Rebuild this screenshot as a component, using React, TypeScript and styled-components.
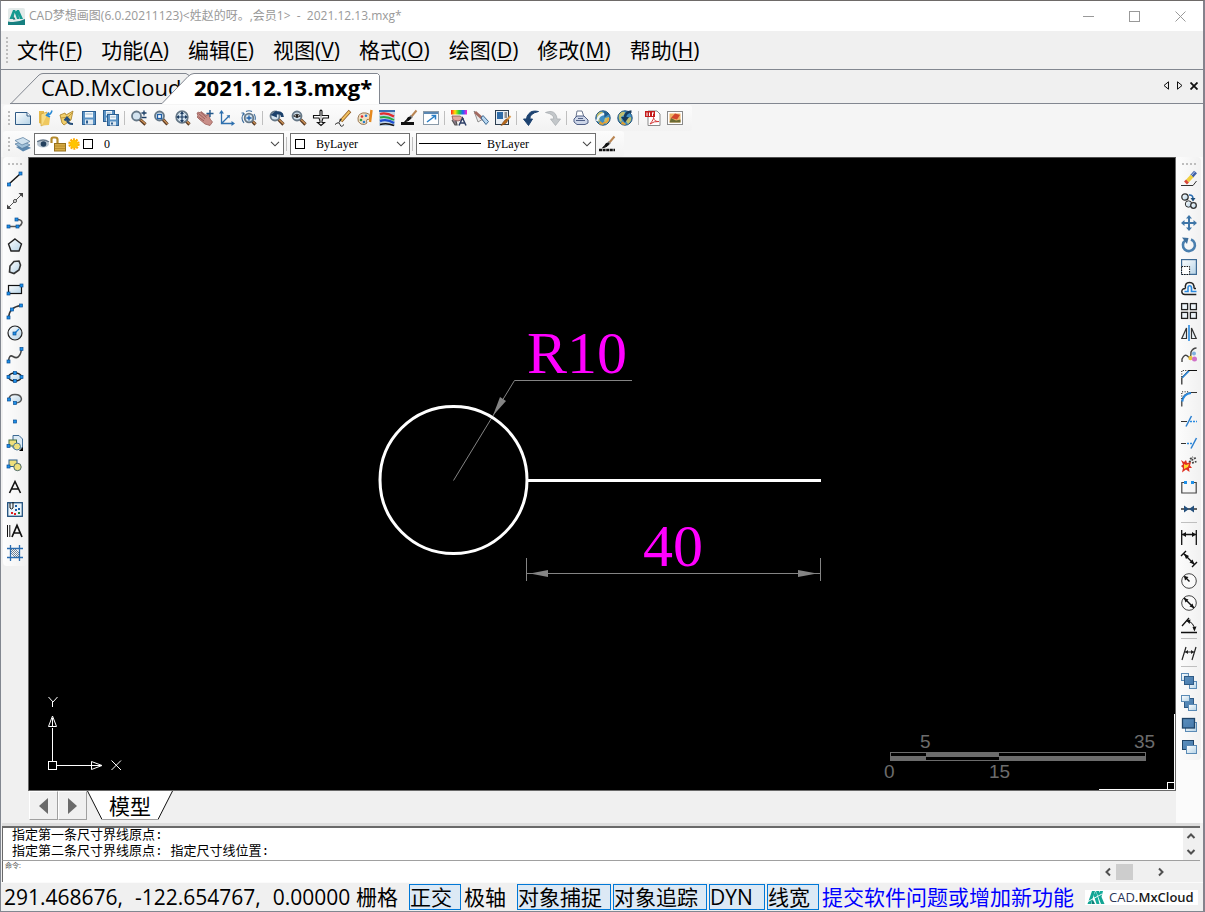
import React from "react";
import styled, { createGlobalStyle } from "styled-components";

const UI = `"Open Sans", "Noto Sans CJK SC", sans-serif`;
const LINE = "#828790";
const FACE = "#f0f0f0";

const Global = createGlobalStyle`
  * { box-sizing: border-box; }
  body { margin: 0; background: ${FACE}; font-family: ${UI}; color: #000; }
  button, select, input, textarea { font: inherit; color: inherit; margin: 0; padding: 0; border: 0; background: none; border-radius: 0; outline: none; }
`;

const Window = styled.div`
  display: flex;
  flex-direction: column;
  min-height: 100vh;
  background: ${FACE};
  border: 1px solid #6e6a68;
  border-left-color: ${LINE};
  border-right: 2px solid #85828c;
  border-bottom-color: ${LINE};
`;

/* ---------- title bar ---------- */
const TitleBar = styled.header`
  display: flex;
  align-items: center;
  height: 30px;
  background: #fff;
  padding-left: 7px;
`;
const Title = styled.h1`
  flex: 1;
  margin: 0 0 0 4px;
  font-size: 12px;
  font-weight: 400;
  line-height: 16px;
  color: #999;
  white-space: pre;
`;
const WinButton = styled.button`
  display: flex;
  align-items: center;
  justify-content: center;
  width: 46px;
  height: 28px;
`;

/* ---------- menu ---------- */
const MenuBar = styled.nav`
  display: flex;
  align-items: center;
  height: 38px;
  padding-left: 5px;
  gap: 9px;
`;
const MenuItems = styled.div`
  display: flex;
  gap: 19px;
`;
const MenuItem = styled.button`
  font-size: 21px;
  line-height: 30px;
  white-space: nowrap;
  u { text-decoration-thickness: 1px; text-underline-offset: 2px; }
`;
const Grip = styled.span<{ $length: number; $across?: boolean }>`
  flex: none;
  width: ${(p) => (p.$across ? p.$length : 2)}px;
  height: ${(p) => (p.$across ? 2 : p.$length)}px;
  background: ${(p) =>
    `repeating-linear-gradient(${p.$across ? "90deg" : "180deg"}, #bdbdbd 0 2px, transparent 2px 4px)`};
`;

/* ---------- document tabs ---------- */
const TabStrip = styled.div`
  display: flex;
  align-items: stretch;
  height: 35px;
  border-top: 1px solid ${LINE};
  padding-left: 9px;
`;
const DocTab = styled.button<{ $active?: boolean }>`
  position: relative;
  flex: none;
  width: ${(p) => (p.$active ? 218 : 152)}px;
  padding: 0 0 0 ${(p) => (p.$active ? 32 : 31)}px;
  text-align: left;
  font-size: 22px;
  line-height: 30px;
  font-weight: ${(p) => (p.$active ? 700 : 400)};
  white-space: nowrap;
  z-index: ${(p) => (p.$active ? 1 : 0)};
  svg { position: absolute; left: 0; top: 0; }
  span { position: relative; }
`;
const TabRest = styled.div`
  flex: 1;
  display: flex;
  justify-content: flex-end;
  align-items: center;
  gap: 4px;
  padding: 0 4px 2px 0;
  border-bottom: 1px solid ${LINE};
`;
const TinyButton = styled.button`
  display: flex;
  align-items: center;
  justify-content: center;
  width: 10px;
  height: 16px;
`;

/* ---------- toolbars ---------- */
const ToolRows = styled.div`
  background: #f5f5f5;
  padding: 1px 0 0 2px;
`;
const ToolRow = styled.div`
  display: flex;
  align-items: center;
  width: fit-content;
  height: 26px;
  padding: 0 6px 0 5px;
  border-radius: 3px;
  background: linear-gradient(#fcfcfc, #f2f2f2);
`;
const GripCell = styled.span`
  width: 4px;
  display: flex;
`;
const ToolButton = styled.button`
  flex: none;
  display: flex;
  align-items: center;
  justify-content: center;
  width: 22px;
  height: 22px;
`;
const Separator = styled.i<{ $across?: boolean }>`
  flex: none;
  width: ${(p) => (p.$across ? 16 : 1)}px;
  height: ${(p) => (p.$across ? 1 : 14)}px;
  margin: ${(p) => (p.$across ? "2px 3px 3px" : "0 3px 0 2px")};
  background: #bfbfbf;
`;
const Combo = styled.label<{ $w: number }>`
  display: flex;
  align-items: center;
  width: ${(p) => p.$w}px;
  height: 22px;
  background: #fff;
  border: 1px solid #707070;
  padding: 0 3px 0 2px;
`;
const Pad = styled.span`
  display: flex;
  padding: 0 2px;
`;
const ComboSelect = styled.select<{ $gap: number }>`
  flex: 1;
  min-width: 0;
  appearance: none;
  margin-left: ${(p) => p.$gap}px;
  font-family: "Liberation Serif", serif;
  font-size: 12px;
  line-height: 18px;
`;

const Body = styled.div`
  flex: 1;
  display: flex;
  align-items: stretch;
`;
const SideBar = styled.aside<{ $right?: boolean }>`
  flex: none;
  width: 27px;
  padding: ${(p) => (p.$right ? "0 2px 0 0" : "0 1px 0 2px")};
  background: ${(p) => (p.$right ? "#fbfbfb" : FACE)};
`;
const SideTools = styled.div`
  display: flex;
  flex-direction: column;
  align-items: center;
  padding: 6px 0 2px;
  border-radius: 4px;
  background: linear-gradient(90deg, #fdfdfd, #f1f1f1);
  & > span { margin-bottom: 3px; }
`;
const Workspace = styled.main`
  flex: 1;
  min-width: 0;
  display: flex;
  flex-direction: column;
`;
const Canvas = styled.section`
  position: relative;
  flex: 1;
  min-height: 400px;
  background: #000;
  border: 1px solid #696969;
  border-top-color: #505050;
  overflow: hidden;
  svg { position: absolute; display: block; }
`;
const Drawing = styled.svg`
  left: 341px;
  top: 152px;
`;
const Ucs = styled.svg`
  left: 11px;
  bottom: 10px;
`;
const ScaleBar = styled.svg`
  right: 0;
  bottom: 0;
`;

/* ---------- layout tabs ---------- */
const LayoutRow = styled.div`
  display: flex;
  height: 32px;
  align-items: flex-start;
  padding-left: 1px;
`;
const NavButton = styled.button`
  display: flex;
  align-items: center;
  justify-content: center;
  width: 29px;
  height: 29px;
  border: 1px solid #a0a0a0;
  border-left-color: #fff;
  border-top-color: #fff;
`;
const LayoutTab = styled.button`
  position: relative;
  width: 86px;
  height: 29px;
  font-size: 21px;
  line-height: 28px;
  svg { position: absolute; left: 0; top: 0; }
  span { position: relative; }
`;

/* ---------- command window ---------- */
const Command = styled.section`
  margin: 0 3px 0 1px;
  border-top: 3px solid #dedede;
`;
const History = styled.div`
  display: flex;
  height: 35px;
  background: #fff;
  border: solid #696969;
  border-width: 2px 0 1px 1px;
  border-bottom-color: #a0a0a0;
`;
const HistoryText = styled.pre`
  flex: 1;
  margin: 0;
  height: 32px;
  padding-left: 9px;
  overflow: hidden;
  font-family: "Liberation Mono", "Noto Sans CJK SC", monospace;
  font-size: 13px;
  line-height: 16px;
`;
const VScroll = styled.div`
  width: 17px;
  display: flex;
  flex-direction: column;
  justify-content: space-between;
  background: ${FACE};
`;
const ScrollButton = styled.button`
  display: flex;
  align-items: center;
  justify-content: center;
  width: 16px;
  height: 16px;
`;
const Prompt = styled.div`
  display: flex;
  height: 21px;
  border-left: 1px solid #696969;
`;
const PromptField = styled.label`
  flex: 1;
  display: flex;
  align-items: flex-start;
  background: #fff;
  padding-left: 2px;
  font-size: 7px;
  line-height: 9px;
  color: #555;
  input { flex: 1; margin-left: 2px; font-size: 12px; line-height: 18px; color: #000; }
`;
const HScroll = styled.div`
  display: flex;
  align-items: center;
  width: 100px;
  background: ${FACE};
`;
const Thumb = styled.span`
  width: 17px;
  height: 16px;
  margin-right: 20px;
  background: #cdcdcd;
`;

/* ---------- status bar ---------- */
const StatusBar = styled.footer`
  display: flex;
  align-items: center;
  gap: 2px;
  height: 29px;
  padding-left: 1px;
  border-top: 1px solid #fbfbfb;
  font-size: 21px;
  line-height: 24px;
  white-space: nowrap;
`;
const Coords = styled.output`
  display: flex;
  gap: 12px;
  width: 351px;
  padding-left: 2px;
`;
const Toggle = styled.button<{ $on?: boolean; $min?: number }>`
  height: 26px;
  min-width: ${(p) => p.$min ?? 0}px;
  padding: 0 8px 0 0;
  text-align: left;
  line-height: 24px;
  border: 1px solid ${(p) => (p.$on ? "#0078d7" : "transparent")};
  background: ${(p) => (p.$on ? "#dce9f5" : "transparent")};
`;
const Feedback = styled.a`
  padding: 0 9px 0 1px;
  color: #0000ff;
  text-decoration: none;
`;
const Brand = styled.div`
  display: flex;
  align-items: center;
  gap: 4px;
  height: 15px;
  padding: 0 4px 0 2px;
  background: #fff;
  font-size: 13px;
  line-height: 15px;
  font-weight: 600;
  color: #1a1a1a;
  em { font-style: normal; font-weight: 400; color: #2b3558; }
`;

/* ---------- icons ---------- */
const I = ({ children }: { children: React.ReactNode }) => (
  <svg width="18" height="18" viewBox="-1 -1 18 18" fill="none" strokeWidth="1" aria-hidden="true">
    {children}
  </svg>
);
const DB = "#2f5a85";
const Lens = ({ cx = 6, cy = 6, r = 4.5, children }: any) => (
  <I>
    <path d={`M${cx + 3.4} ${cy + 3.4}L14.5 14.5`} stroke="#5b3c26" strokeWidth="3.2" />
    <path d={`M${cx + 4} ${cy + 3.6}L14.5 13.8`} stroke="#d89a5a" strokeWidth="1.2" />
    <circle cx={cx} cy={cy} r={r} fill="#d3e3ef" stroke="#667887" strokeWidth="1.8" />
    {children}
  </I>
);
const Grad = () => (
  <svg width="0" height="0" style={{ position: "absolute" }} aria-hidden="true">
    <defs>
      <linearGradient id="ice" x1="0" y1="0" x2="1" y2="1">
        <stop offset="0" stopColor="#ffffff" />
        <stop offset="1" stopColor="#b4d2e6" />
      </linearGradient>
      <linearGradient id="deep" x1="0" y1="0" x2="1" y2="1">
        <stop offset="0" stopColor="#5c8fbd" />
        <stop offset="1" stopColor="#4679ab" />
      </linearGradient>
      <linearGradient id="hue" x1="0" y1="0" x2="1" y2="0">
        <stop offset="0" stopColor="#ff2020" />
        <stop offset=".25" stopColor="#ffe000" />
        <stop offset=".5" stopColor="#20d040" />
        <stop offset=".75" stopColor="#2060ff" />
        <stop offset="1" stopColor="#ff20d0" />
      </linearGradient>
    </defs>
  </svg>
);
const Node = ({ x, y }: { x: number; y: number }) => (
  <rect x={x - 1.5} y={y - 1.5} width="3" height="3" fill="#1e90e8" stroke="#0a4f94" strokeWidth=".7" />
);
const Floppy = ({ x = 0, y = 0, s = 13 }: any) => (
  <g transform={`translate(${x} ${y})`}>
    <rect x=".5" y=".5" width={s} height={s} fill="#5a92c4" stroke="#2c5f92" />
    <rect x="3" y="1" width={s - 5} height={s / 2 - 1} fill="#f3f8fb" />
    <path d={`M3.5 3H${s - 2.5}`} stroke="#9ab6cc" />
    <rect x="3" y={s / 2 + 2} width={s - 5} height={s / 2 - 1.5} fill="#dfe9f1" />
    <rect x="4" y={s / 2 + 3} width="2" height={s / 2 - 3.5} fill="#2c5f92" />
  </g>
);
const Globe = () => (
  <>
    <circle cx="8" cy="8" r="7.2" fill="#3f8fc4" stroke="#1c4f78" />
    <path d="M2 5Q4 1 8 2L7 5 4 7 5 11 3 12Q1 8 2 5ZM10 8L14 7Q15 11 11 14L9 11Z" fill="#c2c070" />
    <path d="M5 11L9 14 8 15 4 14Z" fill="#e0a030" />
  </>
);
const Brush = () => (
  <g>
    <path d="M15.5 .5L10 7" stroke="#b98552" strokeWidth="2" />
    <path d="M10.8 6L8.8 8.2" stroke="#888" strokeWidth="3" />
    <path d="M9.8 7.2Q10 10.5 3.5 11.8Q6.3 9.6 7 7.5Z" fill="#111" stroke="#111" />
  </g>
);

const icons: Record<string, React.ReactNode> = {
  new: <I><path d="M.5 2.5H12L15.500 6V14.500H.5Z" fill="url(#ice)" stroke={DB} /><path d="M12 2.500V6H15.500" stroke={DB} fill="#fff" /></I>,
  open: <I><path d="M2 1H7V15L2 13Z" fill="#e5ba4c" /><path d="M4 4L10 2V13L4 16Z" fill="#f8dd85" stroke="#c9982e" strokeWidth=".6" /><path d="M10 6L13 8 12 15 5 15.500 8 9Z" fill="#efc85f" /><path d="M15 .5Q14 4.500 11 5M12 2.500L9.500 5.200 13 7" stroke="#2a8ad4" strokeWidth="1.500" /></I>,
  recent: <I><path d="M1 5L6 3 7 5 14 1 12 10 5 15 3 13Z" fill="#f1cf6b" stroke="#a67c22" strokeWidth=".8" /><path d="M2 8L9 7 13 3" stroke="#c19a3c" /><path d="M14 14Q8 14 8 9M5.500 10.500L8 7.500 10.800 10.500" stroke="#274f7a" strokeWidth="2" /></I>,
  save: <I><Floppy x={1} y={1} /></I>,
  saveall: <I><Floppy x={0} y={0} s={11} /><Floppy x={4} y={4} s={11} /></I>,
  zoomrt: <Lens cx={5.5} cy={6}><path d="M10.500 3H15.500M13 .5V5.500M10.500 7.500H15.500" stroke="#1d3f66" strokeWidth="1.300" /></Lens>,
  zoomwin: <Lens cx={6.5}><rect x="4.500" y="4.500" width="4" height="4" fill="#fff" stroke="#1e5fa8" strokeWidth="1.300" /></Lens>,
  zoomext: <Lens cx={7} cy={7} r={5.8}><path d="M7 2V12M2 7H12" stroke="#1a3a60" strokeWidth="1.200" /><path d="M7 1.500L9 4H5ZM7 12.500L5 10H9ZM1.500 7L4 5V9ZM12.500 7L10 9V5Z" fill="#1a3a60" /></Lens>,
  pan: <I><path d="M0 3L2 2 3 3 4 1.500 10 6 10 3.500 12 4 13 9 15.500 12 13 15.500 8 14 2 9 0 7 1 6Z" fill="#c98e88" stroke="#9a615c" strokeWidth=".8" /><path d="M1.500 3.500L8 9M4 2.500L9.500 7.500M1.500 7L7 11" stroke="#8b504e" strokeWidth=".8" /><path d="M13 0V7M9.500 3.500H16.500" stroke="#255a8c" strokeWidth="1.400" /></I>,
  ucs: <I><path d="M2.500 2V13.500H14M2.500 13.500L9 7" stroke="#2d6fae" strokeWidth="1.300" /><path d="M2.500 0L5 3.500H0ZM16 13.500L12.500 11V16ZM11 5L10.500 8.500 7.500 5.500Z" fill="#2d6fae" /></I>,
  zoomdyn: <Lens cx={8} cy={8} r={4.3}><path d="M8 5.500V10.500M5.500 8H10.500" stroke="#1e5fa8" strokeWidth="1.300" /><path d="M3 13Q-1 8 3 3M5 1.500Q8 0 11 1.500M3 3H.5M3 3V5.500M13 4Q15 7 14 10" stroke="#3e6f9f" strokeWidth="1.100" /></Lens>,
  zoomprev: <Lens cx={6}><path d="M13.500 7Q13 1 6 3.500" stroke="#1b416b" strokeWidth="2.800" /><path d="M1.500 5L7.500 .5 8 7.500Z" fill="#1b416b" /></Lens>,
  zoomeye: <Lens cx={6}><path d="M2.500 6Q6 2.500 9.500 6Q6 9 2.500 6Z" fill="#fff" stroke="#333" /><circle cx="6" cy="6" r="1.500" fill="#222" /></Lens>,
  plane: <I><path d="M7 1L8 0 9 1V5.500H15.500V8H10L9 11V12.500H11.500L8 15.500 4.500 12.500H7V11L6 8H.5V5.500H7Z" fill="#fff" stroke="#111" strokeWidth="1.100" /><path d="M8 2V13" stroke="#777" strokeWidth=".8" /></I>,
  pencil: <I><path d="M15 1L6 11" stroke="#8a5218" strokeWidth="3.400" /><path d="M14.500 1.500L6 11" stroke="#f0c060" strokeWidth="2" /><path d="M7 9.500L3.500 13.500 5 8.500Z" fill="#333" /><path d="M0 14.500Q4 11 5 14.500T9 14.500" stroke="#222" /></I>,
  palette: <I><path d="M1 8Q2 2 9 3Q14 4 13 8Q12 10 10 9.500Q9 11 10 13Q8 15.500 4 14Q0 12 1 8Z" fill="#f2dfc4" stroke="#9a7a55" /><circle cx="5" cy="6.500" r="1.300" fill="#e03030" /><circle cx="9" cy="5.800" r="1.300" fill="#2a7fd0" /><circle cx="4" cy="10" r="1.300" fill="#35a040" /><circle cx="7" cy="12" r="1.300" fill="#2a7fd0" /><path d="M14.500 0L13 12" stroke="#e58a20" strokeWidth="2.400" /></I>,
  swirl: <I><rect x="0" y="0" width="16" height="16" fill="#c3d5e6" /><path d="M0 0H16V2H0Z" fill="#3a6fb0" /><path d="M1 4Q7 2 15 6.500" stroke="#e22d2d" strokeWidth="2.200" /><path d="M1 7.500Q7 5.500 15 10" stroke="#27a844" strokeWidth="2" /><path d="M1 11Q8 8.500 15 13" stroke="#1d4fd0" strokeWidth="2.400" /><path d="M1 14.500Q8 12.500 15 15.500" stroke="#111" strokeWidth="1.600" /></I>,
  brush: <I><Brush /><path d="M0 13.500H13" stroke="#111" strokeWidth="3" /></I>,
  expand: <I><rect x=".5" y="1.500" width="15" height="13" fill="#fff" stroke="#8a9aa8" /><path d="M1 3H15" stroke="#5a87b2" strokeWidth="2" /><path d="M4 12L12 6M8.500 5.500H12.500V9.500" stroke="#2a7fc6" strokeWidth="1.500" /></I>,
  match: <I><rect x="0" y="0" width="16" height="4.500" fill="url(#hue)" /><path d="M1 6H9L13 9 7 11 2 10Z" fill="#e2a8a0" stroke="#8b504e" strokeWidth=".8" /><path d="M1 10L4 15H6L5 11" stroke="#555" strokeWidth="1.200" fill="#8c7a88" /><path d="M8 15.500L11.500 8 15 15.500M9.500 13H13.500" stroke="#2c3e66" strokeWidth="1.500" /></I>,
  rubber: <I><path d="M1 1L5 12 10 9Z" fill="#e9e9e9" stroke="#777" strokeWidth=".8" /><path d="M2 2L11 10" stroke="#a36a60" strokeWidth="3" /><path d="M8 8L13 14.500 15.500 11.500 10 5.500Z" fill="#b9d7ef" stroke="#3c6a94" /></I>,
  style: <I><rect x=".5" y=".5" width="13" height="14" fill="#e8eef4" stroke="#2c3e50" /><rect x="2" y="2" width="6" height="7" fill="#2f6ca8" /><path d="M9.500 3H12M9.500 5H12M9.500 7H12" stroke="#333" /><path d="M15.500 6L11 11" stroke="#dd9a4c" strokeWidth="2" /><path d="M12 9Q14 13 6 15.500Q8 12 10 10Z" fill="#b96a1c" stroke="#7b4512" strokeWidth=".6" /></I>,
  undo: <I><path d="M15.500 1.500Q9 0 6 3.500Q3.500 6 3.500 9H.5L5.500 15.500 9.500 9H6.800Q6.500 3.500 15.500 1.500Z" fill="#1c4270" stroke="#1c4270" /></I>,
  redo: <I><path d="M.5 2.500Q7 0 10 3.500Q12 6 12 9H15.500L10.500 15.500 5.500 9H8.800Q9 4 .5 2.500Z" fill="#c3c7ca" stroke="#a9aeb2" strokeWidth=".8" /></I>,
  print: <I><path d="M3 7L4 1H9L11 7" fill="#fff" stroke="#6c7890" /><path d="M1 9L4 6H11L15 10V13L12 14.500H4L1 12Z" fill="#cdd6e8" stroke="#4f5f86" /><path d="M3 10.500H12M5 8.500H10" stroke="#4f5f86" strokeWidth="1.200" /></I>,
  webup: <I><Globe /><path d="M2 11Q4 3 12 4" stroke="#eef4f8" strokeWidth="2.200" /><path d="M9 1L14 4 9.500 7.500Z" fill="#1f5a8a" /><path d="M8 13Q13 13 13.500 8" stroke="#f0a030" strokeWidth="1.600" /></I>,
  webdown: <I><Globe /><path d="M14.500 1.500Q8 2 8 8" stroke="#163a5c" strokeWidth="2.600" /><path d="M4 7H12L8 12.500Z" fill="#163a5c" /></I>,
  pdf: <I><path d="M3 1H12L15 4V15.500H3Z" fill="#fff" stroke="#8a8a8a" /><rect x="0" y="1" width="10" height="6" fill="#c41c1c" /><path d="M2 2.500V6M4.500 2.500V6M7.500 2.500V6M7.500 3H9" stroke="#fff" /><path d="M5 14Q9 9 8.500 7.500Q9.500 12 14 11.500Q9 11 5 14" stroke="#d43a3a" /></I>,
  image: <I><rect x=".5" y="1.500" width="15" height="13" fill="#fff" stroke="#8a8a8a" /><rect x="2.500" y="3.500" width="11" height="9" fill="#f0b264" /><path d="M2.500 12.500L4 8 9 10.500 13.500 9.500V12.500Z" fill="#6a6b34" /><path d="M4 8L8 3.500 13 5 10 9.500Z" fill="#d2452c" /></I>,
  layers: <I><path d="M1 11L9 8 16 12 8 15.500Z" fill="#5b87ae" /><path d="M0 8L8 5 15 9 7 12.500Z" fill="#9fc0d9" stroke="#53799b" strokeWidth=".7" /><path d="M0 4.500L8 1.500 15 5.500 7 9Z" fill="#cfe1ee" stroke="#53799b" strokeWidth=".7" /></I>,
  brushline: <I><Brush /><path d="M0 14H16" stroke="#111" strokeWidth="2.600" strokeDasharray="3 .6" /></I>,

  line: <I><path d="M2 13L13 3" stroke="#111" strokeWidth="1.400" /><Node x={2} y={13.5} /><Node x={13.5} y={2.5} /></I>,
  xline: <I><path d="M1 15L15 1" stroke="#555" /><path d="M0 16V11.500L4.500 16ZM16 0V4.500L11.500 0Z" fill="#444" /><circle cx="8" cy="8" r="1.500" fill="#fff" stroke="#444" /></I>,
  pline: <I><path d="M2 11.500H10M9 4.500Q14.500 4 15 7.500Q14 11.500 10 11.500" stroke="#555" strokeWidth="1.600" /><Node x={1.5} y={11.5} /><Node x={10.5} y={11.5} /><Node x={9.5} y={4.5} /></I>,
  polygon: <I><path d="M8 2L14.500 7 12 14H4L1.500 7Z" fill="url(#ice)" stroke="#222" strokeWidth="1.400" /></I>,
  poly2: <I><path d="M7 2.500L12 2 13.500 6 12 11 7 14.500 2.500 13 3 7Z" fill="url(#ice)" stroke="#333" strokeWidth="1.600" /></I>,
  rect: <I><rect x="1.500" y="4.500" width="13" height="8" fill="url(#ice)" stroke="#111" strokeWidth="1.200" /><Node x={1.5} y={12.5} /><Node x={14.5} y={4.5} /></I>,
  arc: <I><path d="M1.500 15Q2 4 14 2.500" stroke="#333" strokeWidth="1.300" /><Node x={1.5} y={14.5} /><Node x={5} y={6.5} /><Node x={14} y={2.5} /></I>,
  circle: <I><circle cx="8" cy="8" r="7" fill="url(#ice)" stroke="#222" strokeWidth="1.200" /><path d="M8 8L12 4" stroke="#1e7fd0" strokeWidth="1.300" /><Node x={7.5} y={8.5} /></I>,
  spline: <I><path d="M1.500 14.500Q2 7 6 9.500T12 9Q14 7 14.500 2" stroke="#444" strokeWidth="1.500" /><Node x={1.5} y={14.5} /><Node x={14.5} y={2} /></I>,
  ellipse: <I><ellipse cx="8" cy="8" rx="6.500" ry="4" fill="url(#ice)" stroke="#222" strokeWidth="1.300" /><Node x={1.5} y={8} /><Node x={14.5} y={8} /><Node x={8} y={4} /><Node x={8} y={12} /></I>,
  ellarc: <I><path d="M2 8.500Q2 3.500 8 3.500T14.500 8Q14 12 8 12" fill="url(#ice)" stroke="#555" strokeWidth="1.500" /><Node x={2} y={8.5} /><Node x={8} y={12} /></I>,
  point: <I><Node x={8} y={8.5} /></I>,
  insert: <I><path d="M6 .5H12L15.500 4V13H6Z" fill="#dceaf5" stroke="#3d6a94" /><rect x="2" y="5" width="7.500" height="6" fill="#f0e07c" stroke="#3f6a3f" /><circle cx="10" cy="11.500" r="3.500" fill="#f0e07c" stroke="#4b7a9b" /><Node x={1.5} y={11} /><path d="M16 12V16H12Z" fill="#000" /></I>,
  block: <I><rect x="2" y="3" width="8" height="6.500" fill="#f0e07c" stroke="#2a5c8c" /><circle cx="10.500" cy="10" r="3.700" fill="#f0e07c" stroke="#4b6a6b" /><Node x={1.5} y={9.5} /></I>,
  text: <I><path d="M2.500 14L8 2.500 13.500 14M4.500 10H11.500" stroke="#111" strokeWidth="1.600" /></I>,
  attach: <I><rect x=".7" y="1.700" width="14.600" height="13.600" fill="#eaf4fa" stroke="#1f4f7c" strokeWidth="1.300" /><path d="M3 2V7Q4.500 9 6 7V1" stroke="#111" /><path d="M8 4h2v2h-2zM11 7h2v2h-2zM8 8h2v2h-2z" fill="#1e5fa8" /><path d="M4 11h2v2h-2zM7 12h2v2h-2z" fill="#e02020" /><path d="M11 11h2v2h-2z" fill="#208040" /></I>,
  mtext: <I><path d="M.5 2V14M2.800 2V14" stroke="#111" /><path d="M5 14L10 2.500 15 14M6.800 10H13.200" stroke="#111" strokeWidth="1.700" /></I>,
  hatch: <I><path d="M3.500 0V16M12.500 0V16M0 3.500H16M0 12.500H16" stroke="#2a6cb0" strokeWidth="1.300" /><path d="M4 8L8 12M4 4L12 12M8 4L12 8M4 6L10 12M6 4L12 10" stroke="#2f4f6f" strokeWidth=".7" /></I>,

  erase: <I><path d="M14.500 1L10.500 5.500" stroke="#3d5fa8" strokeWidth="4" /><path d="M14 .5L10 5" stroke="#b8c8e8" /><path d="M11 5L6.500 10" stroke="#f0d040" strokeWidth="4" /><path d="M6.500 10L4.500 12" stroke="#d84838" strokeWidth="4" /><path d="M0 14.500H12L15.500 10" stroke="#333" /></I>,
  copy: <I><circle cx="4" cy="4" r="3.200" fill="url(#ice)" stroke="#333" strokeWidth="1.300" /><circle cx="7.500" cy="11" r="3.200" fill="url(#ice)" stroke="#333" /><circle cx="12.500" cy="12.500" r="2.800" fill="url(#ice)" stroke="#333" strokeWidth="1.300" /><path d="M8 2Q12 1.500 12 6" stroke="#2a6cb0" strokeWidth="1.600" /><path d="M9.500 5H14.500L12 8.500Z" fill="#1f4f7c" /></I>,
  move: <I><path d="M8 2V14M2 8H14" stroke="#3f76a8" strokeWidth="2" /><path d="M8 0L11 3.500H5ZM8 16L5 12.500H11ZM0 8L3.500 5V11ZM16 8L12.500 11V5Z" fill="#3f76a8" /></I>,
  rotate: <I><path d="M10 2.500A6 6 0 1 1 4.500 3.200" stroke="#4a7fae" strokeWidth="2.600" /><path d="M1 .5L7.500 1 6 7Z" fill="#3f6f9c" /></I>,
  scale: <I><rect x=".6" y=".6" width="14.800" height="14.800" fill="url(#ice)" stroke="#3d6a94" strokeWidth="1.200" /><rect x=".6" y="7.500" width="8" height="8" fill="#fff" stroke="#111" strokeDasharray="1.500 1" /></I>,
  offset: <I><path d="M4.500 7.500Q3.500 1.500 8.500 1.500T13 7.500M4.500 7.500Q.8 7.500 .8 10.500T4 13.500H15.300M13 7.500H15" stroke="#222" strokeWidth="1.400" /><path d="M3.500 10.500H7V7Q7 4.800 8.700 4.800T10.500 7V10.500H15.500" stroke="#2a8ae0" strokeWidth="1.600" /></I>,
  array: <I>{[[0.6, 0.6], [9.4, 0.6], [0.6, 9.4], [9.4, 9.4]].map(([x, y]) => <rect key={`${x}${y}`} x={x} y={y} width="6" height="6" fill="#eef5fa" stroke="#222" strokeWidth="1.300" />)}</I>,
  mirror: <I><path d="M8 0V16" stroke="#2a8ae0" strokeWidth="1.600" /><path d="M5.500 3V13.500H.8ZM10.500 3V13.500H15.200Z" fill="#eef5fa" stroke="#333" strokeWidth="1.200" /></I>,
  blend: <I><path d="M1 15V12Q4 6 7 9.500T10 5Q12 1 15.500 1" stroke="#444" strokeWidth="1.400" /><circle cx="13" cy="6.500" r="2" fill="#7fb0e0" /><circle cx="9.500" cy="11" r="2.200" fill="#e8c040" /><circle cx="13.500" cy="12" r="2.500" fill="#d070c8" /></I>,
  chamfer: <I><path d="M.8 15.500V9L8 1.500" stroke="#333" strokeWidth="1.300" /><path d="M1.200 8.800L8 2" stroke="#2a8ae0" strokeWidth="1.500" /><path d="M8 1.500H16" stroke="#111" /><path d="M.8 8V1.500H8" stroke="#111" strokeDasharray="1 1.500" /></I>,
  fillet: <I><path d="M.8 15.500V10Q2 2.500 10 1.500H16" stroke="#333" strokeWidth="1.200" /><path d="M1.200 10.500Q2.500 3 10 2" stroke="#2a8ae0" strokeWidth="2.200" /><path d="M.8 8V.8H8" stroke="#111" strokeDasharray="1 1.500" /></I>,
  trim: <I><path d="M0 8.500H6" stroke="#333" /><path d="M9 8.500H16" stroke="#2a8ae0" strokeDasharray="2 1" strokeWidth="1.300" /><path d="M5 13.500L10.500 3" stroke="#2a7fd0" strokeWidth="1.500" /></I>,
  extend: <I><path d="M0 8.500H5" stroke="#333" /><path d="M6 8.500H11" stroke="#2a8ae0" strokeDasharray="2 1" strokeWidth="1.300" /><path d="M10 13.500L15.500 3" stroke="#2a7fd0" strokeWidth="1.500" /></I>,
  explode: <I><path d="M0 3L3 5 5 3 6 6 10 5 9 8.500 11 11 8 11 8.500 15 5 12.500 1 15.500 2 11 0 9 2 7.500Z" fill="#e03020" /><path d="M3 7L5 8 8 7 7 10 5 11 3 12Z" fill="#ffd830" /><path d="M8 5L15 .5M11 6L15.500 4.500M9 2L12 0" stroke="#444" strokeWidth="1.700" strokeDasharray="2 1" /></I>,
  breakpt: <I><path d="M3.500 3.500H.8V14H15.200V3.500H12.500" stroke="#444" strokeWidth="1.200" /><rect x="3" y="2" width="3" height="3" fill="#1e90e8" /><rect x="10" y="2" width="3" height="3" fill="#1e90e8" /></I>,
  join: <I><path d="M0 8H16" stroke="#222" strokeWidth="1.400" /><path d="M3 4.500L8 8 3 11.500ZM13 4.500L8 8 13 11.500Z" fill="#24507c" /></I>,
  dimlin: <I><path d="M.7 1V16M15.300 1V16M1 5.500H15" stroke="#111" strokeWidth="1.300" /><path d="M1 5.500L5 3V8ZM15 5.500L11 3V8Z" fill="#111" /></I>,
  dimali: <I><path d="M0 5L5 0M11 16L16 11M3 3L13 13" stroke="#111" strokeWidth="1.400" /><path d="M3 2.500L8 5 5 8ZM13.500 13.500L8.500 11.500 11.500 8.500Z" fill="#111" /></I>,
  dimrad: <I><circle cx="8" cy="8" r="7.300" fill="#fafafa" stroke="#444" /><path d="M8.500 8.500L3.500 3.500" stroke="#111" strokeWidth="1.400" /><path d="M3 3L7.500 4 4 7.500Z" fill="#111" /></I>,
  dimdia: <I><circle cx="8" cy="8" r="7.300" fill="#fafafa" stroke="#444" /><path d="M3 3L13 13" stroke="#111" strokeWidth="1.400" /><path d="M3 3L7.500 4.500 4.500 7.500ZM13 13L8.500 11.500 11.500 8.500Z" fill="#111" /></I>,
  dimang: <I><path d="M0 15.500H16M1 9L8 1" stroke="#111" strokeWidth="1.300" /><path d="M6 4Q13 5 13.500 13" stroke="#111" /><path d="M5.500 3.500L9.500 2.500 8.500 7ZM13.500 14.500L11.500 10 15.500 9.500Z" fill="#111" /></I>,
  dimedit: <I><path d="M1 15L5 2M11 15L15 2M4 7H13" stroke="#222" strokeWidth="1.200" /><path d="M4 7L7 5V9ZM13 7L10 5V9Z" fill="#222" /></I>,
  front: <I><rect x=".5" y=".5" width="7" height="7" fill="url(#ice)" stroke="#5a8ab5" /><rect x="8.500" y="8.500" width="7" height="7" fill="url(#ice)" stroke="#5a8ab5" /><rect x="3.500" y="3.500" width="9" height="8" fill="url(#deep)" stroke="#2f5a85" /></I>,
  back: <I><rect x="3.500" y="3.500" width="9" height="9" fill="url(#deep)" stroke="#2f5a85" /><rect x=".5" y=".5" width="8" height="6" fill="url(#ice)" stroke="#5a8ab5" /><rect x="7.500" y="9.500" width="8" height="6" fill="url(#ice)" stroke="#5a8ab5" /></I>,
  above: <I><rect x="4.500" y="5.500" width="11" height="9" fill="url(#ice)" stroke="#5a8ab5" /><rect x="1.500" y="1.500" width="12" height="9.500" fill="url(#deep)" stroke="#1f4468" strokeWidth="1.300" /></I>,
  under: <I><rect x="1.500" y="1.500" width="11" height="9" fill="url(#deep)" stroke="#1f4468" /><rect x="5.500" y="6.500" width="10" height="8" fill="url(#ice)" stroke="#5a8ab5" /></I>,
};

const Mark = () => (
  <svg width="18" height="15" viewBox="0 0 18 15" aria-hidden="true">
    <path d="M5 1H8L4 14H.5ZM9 1H12L17.500 14H14Z" fill="#12a594" />
    <path d="M6.500 5L9 1 12.500 14H9.500ZM13 1H16L14.500 7 12.500 3Z" fill="#16ab9a" />
    <path d="M5.500 9L8 14H4.500Z" fill="#0c7f77" />
    <path d="M1 11.500L15 4" stroke="#fff" strokeWidth=".9" />
  </svg>
);
const Chevron = () => (
  <svg width="10" height="6" viewBox="0 0 10 6" fill="none" aria-hidden="true">
    <path d="M1 .8L5 4.800 9 .8" stroke="#444" strokeWidth="1.100" />
  </svg>
);
const Swatch = () => (
  <svg width="11" height="11" viewBox="0 0 11 11" aria-hidden="true">
    <rect x=".5" y=".5" width="9" height="9" fill="#fff" stroke="#000" />
  </svg>
);
const Arrow = ({ d }: { d: string }) => (
  <svg width="10" height="10" viewBox="0 0 10 10" fill="none" aria-hidden="true">
    <path d={d} stroke="#505050" strokeWidth="2" />
  </svg>
);

const topTools = ["new open recent save saveall", "zoomrt zoomwin zoomext pan ucs zoomdyn", "zoomprev zoomeye plane pencil palette swirl brush expand", "match rubber style", "undo redo", "print webup webdown", "pdf image"];
const leftTools = ["line xline pline polygon poly2 rect arc circle spline ellipse ellarc point insert block text attach mtext hatch"];
const rightTools = ["erase copy move rotate scale offset array mirror blend chamfer fillet trim extend explode breakpt join", "dimlin dimali dimrad dimdia dimang", "dimedit", "front back above under"];

const Tools = ({ groups, across }: { groups: string[]; across?: boolean }) => (
  <>
    {groups.map((g, i) => (
      <React.Fragment key={g}>
        {i > 0 && <Separator $across={across} />}
        {g.split(" ").map((n) => (
          <ToolButton key={n} aria-label={n}>{icons[n]}</ToolButton>
        ))}
      </React.Fragment>
    ))}
  </>
);

const menus = [["文件", "F"], ["功能", "A"], ["编辑", "E"], ["视图", "V"], ["格式", "O"], ["绘图", "D"], ["修改", "M"], ["帮助", "H"]];

export default function App() {
  return (
    <Window>
      <Global />
      <Grad />
      <TitleBar>
        <svg width="17" height="17" viewBox="0 0 17 17" aria-hidden="true">
          <rect width="17" height="17" rx="2" fill="#e4ebea" />
          <path d="M0 13.500Q8 15.500 17 11V17H0Z" fill="#167f80" />
          <path d="M5 2H7.500L5 11H1.500ZM8.500 2H11L15 11H12ZM6.500 4L9 2 11.500 11H9Z" fill="#159a90" />
          <path d="M5.500 8L7.500 11.500H5Z" fill="#0b6c6c" />
        </svg>
        <Title>CAD梦想画图(6.0.20211123)&lt;姓赵的呀。,会员1&gt;  -  2021.12.13.mxg*</Title>
        <WinButton aria-label="最小化"><svg width="11" height="11"><path d="M0 5.500H11" stroke="#999" /></svg></WinButton>
        <WinButton aria-label="最大化"><svg width="11" height="11"><rect x=".5" y=".5" width="10" height="10" fill="none" stroke="#999" /></svg></WinButton>
        <WinButton aria-label="关闭"><svg width="11" height="11"><path d="M.5 .5L10.500 10.500M10.500 .5L.5 10.500" stroke="#999" /></svg></WinButton>
      </TitleBar>
      <MenuBar>
        <Grip $length={26} />
        <MenuItems>
          {menus.map(([t, k]) => <MenuItem key={k}>{t}(<u>{k}</u>)</MenuItem>)}
        </MenuItems>
      </MenuBar>
      <TabStrip>
        <DocTab>
          <svg width="180" height="34" fill="none" aria-hidden="true">
            <path d="M1 33.500L29 5Q31 3.500 33 3.500H176L180 6" stroke={LINE} />
            <path d="M0 33.500H160" stroke={LINE} />
          </svg>
          <span>CAD.MxCloud</span>
        </DocTab>
        <DocTab $active>
          <svg width="218" height="34" aria-hidden="true">
            <path d="M0 33.500L26 6.500Q29 3.500 32 3.500H215.500L217.500 5.500V33.500V34H0Z" fill="#fff" />
            <path d="M0 33.500L26 6.500Q29 3.500 32 3.500H215.500L217.500 5.500V34" fill="none" stroke={LINE} />
          </svg>
          <span>2021.12.13.mxg*</span>
        </DocTab>
        <TabRest>
          <TinyButton aria-label="上一个"><svg width="6" height="9"><path d="M5.500 .8V8.200L1 4.500Z" fill="none" stroke="#111" /></svg></TinyButton>
          <TinyButton aria-label="下一个"><svg width="6" height="9"><path d="M.5 .8V8.200L5 4.500Z" fill="none" stroke="#111" /></svg></TinyButton>
          <TinyButton aria-label="关闭标签"><svg width="8" height="8"><path d="M.5 .5L7.500 7.500M7.500 .5L.5 7.500" stroke="#111" strokeWidth="1.800" /></svg></TinyButton>
        </TabRest>
      </TabStrip>
      <ToolRows>
        <ToolRow>
          <GripCell><Grip $length={14} /></GripCell>
          <Tools groups={topTools} />
        </ToolRow>
        <ToolRow>
          <GripCell><Grip $length={14} /></GripCell>
          <ToolButton aria-label="图层">{icons.layers}</ToolButton>
          <Combo $w={250}>
            <svg width="44" height="16" viewBox="0 0 44 16" aria-hidden="true">
              <ellipse cx="6" cy="8" rx="6" ry="3.500" fill="#b7c4d0" />
              <path d="M0 6Q6 2 12 6" stroke="#66788a" strokeWidth="1.500" fill="none" />
              <circle cx="6.500" cy="8" r="2.800" fill="#23405e" />
              <path d="M14.500 7V3Q14.500 1.500 16 1.500H18Q20.500 1.500 20.500 3.500V8" fill="none" stroke="#b48a2c" strokeWidth="2.200" />
              <rect x="17.500" y="7.500" width="11" height="7.500" fill="#d6ab45" stroke="#96701c" />
              <path d="M18 10H28M18 12.500H28" stroke="#b88c2c" />
              <circle cx="37" cy="8" r="4.300" fill="#ffc400" />
              <circle cx="37" cy="8" r="4.800" fill="none" stroke="#ffab00" strokeWidth="1.800" strokeDasharray="2 1" />
            </svg>
            <Pad><Swatch /></Pad>
            <ComboSelect $gap={8} aria-label="图层选择"><option>0</option></ComboSelect>
            <Chevron />
          </Combo>
          <Separator />
          <Combo $w={120}>
            <Pad><Swatch /></Pad>
            <ComboSelect $gap={8} aria-label="颜色"><option>ByLayer</option></ComboSelect>
            <Chevron />
          </Combo>
          <Separator />
          <Combo $w={180}>
            <svg width="62" height="2" aria-hidden="true"><path d="M0 .5H62" stroke="#000" /></svg>
            <ComboSelect $gap={6} aria-label="线型"><option>ByLayer</option></ComboSelect>
            <Chevron />
          </Combo>
          <ToolButton aria-label="线型管理">{icons.brushline}</ToolButton>
        </ToolRow>
      </ToolRows>
      <Body>
        <SideBar>
          <SideTools>
            <Grip $length={14} $across />
            <Tools groups={leftTools} across />
          </SideTools>
        </SideBar>
        <Workspace>
          <Canvas aria-label="绘图区">
            <Drawing width="470" height="290" viewBox="370 310 470 290" fill="none">
              <path d="M453.500 480.500L514.500 380.500H632" stroke="#848484" />
              <path d="M493 415.500L500 397 506 401Z" fill="#848484" />
              <circle cx="453.500" cy="480" r="73.500" stroke="#fff" strokeWidth="3" />
              <path d="M527 480.500H821" stroke="#fff" strokeWidth="3" />
              <path d="M526.500 558V581M820.500 558V581M526 573.500H821" stroke="#848484" />
              <path d="M530 573.500L548 570V577ZM817 573.500L798 570V577Z" fill="#848484" />
              <text x="527" y="373" fill="#ff00ff" fontFamily="Liberation Serif, serif" fontSize="60">R10</text>
              <text x="643" y="566" fill="#ff00ff" fontFamily="Liberation Serif, serif" fontSize="60">40</text>
            </Drawing>
            <Ucs width="90" height="90" viewBox="40 690 90 90" fill="none" stroke="#fff">
              <path d="M48.500 697L53 702 57.500 697M52.500 702V707M52.500 728V761M57 765.500H91M111.500 760.500L121 770M121 760.500L111.500 770" />
              <rect x="48.500" y="761.500" width="8" height="8" />
              <path d="M52.500 716L48.500 726.500H56.500ZM52.500 718V726M102 765.500L91.500 761.500V769.500ZM92 765.500H101" />
            </Ucs>
            <ScaleBar width="300" height="80" viewBox="875 710 300 80" fill="none">
              <rect x="890.500" y="752.500" width="255" height="8" stroke="#6c6c6c" />
              <path d="M891 758H926M926 755H999M999 758H1145" stroke="#6c6c6c" strokeWidth="4" />
              <g fill="#6c6c6c" fontFamily="Liberation Sans, sans-serif" fontSize="19">
                <text x="920" y="748">5</text>
                <text x="1134" y="748">35</text>
                <text x="884" y="778">0</text>
                <text x="989" y="778">15</text>
              </g>
              <path d="M1099 789.500H1174.500V714" stroke="#fff" />
              <rect x="1167.500" y="782.500" width="7" height="7" stroke="#fff" fill="#000" />
            </ScaleBar>
          </Canvas>
          <LayoutRow>
            <NavButton aria-label="向左"><svg width="9" height="16"><path d="M9 0V16L0 8Z" fill="#6a6a6a" /></svg></NavButton>
            <NavButton aria-label="向右"><svg width="9" height="16"><path d="M0 0V16L9 8Z" fill="#6a6a6a" /></svg></NavButton>
            <LayoutTab>
              <svg width="86" height="29" aria-hidden="true">
                <path d="M.5 0L15 28.500H71L85.500 0Z" fill="#fff" />
                <path d="M.5 0L15 28.500M71 28.500L85.500 0" stroke="#111" />
                <path d="M15 28.500H71" stroke="#a0a0a0" />
              </svg>
              <span>模型</span>
            </LayoutTab>
          </LayoutRow>
        </Workspace>
        <SideBar $right>
          <SideTools>
            <Grip $length={14} $across />
            <Tools groups={rightTools} across />
          </SideTools>
        </SideBar>
      </Body>
      <Command>
        <History>
          <HistoryText>{"指定第一条尺寸界线原点:\n指定第二条尺寸界线原点: 指定尺寸线位置:"}</HistoryText>
          <VScroll>
            <ScrollButton aria-label="上滚"><Arrow d="M1.500 7L5 3.500 8.500 7" /></ScrollButton>
            <ScrollButton aria-label="下滚"><Arrow d="M1.500 3L5 6.500 8.500 3" /></ScrollButton>
          </VScroll>
        </History>
        <Prompt>
          <PromptField>命令:<input type="text" /></PromptField>
          <HScroll>
            <ScrollButton aria-label="左滚"><Arrow d="M7 1.500L3.500 5 7 8.500" /></ScrollButton>
            <Thumb />
            <ScrollButton aria-label="右滚"><Arrow d="M3 1.500L6.500 5 3 8.500" /></ScrollButton>
          </HScroll>
        </Prompt>
      </Command>
      <StatusBar>
        <Coords><span>291.468676,</span><span>-122.654767,</span><span>0.00000</span></Coords>
        <Toggle>栅格</Toggle>
        <Toggle $on>正交</Toggle>
        <Toggle>极轴</Toggle>
        <Toggle $on>对象捕捉</Toggle>
        <Toggle $on>对象追踪</Toggle>
        <Toggle $on $min={56}>DYN</Toggle>
        <Toggle $on>线宽</Toggle>
        <Feedback href="#feedback">提交软件问题或增加新功能</Feedback>
        <Brand><Mark /><span><em>CAD</em>.MxCloud</span></Brand>
      </StatusBar>
    </Window>
  );
}
